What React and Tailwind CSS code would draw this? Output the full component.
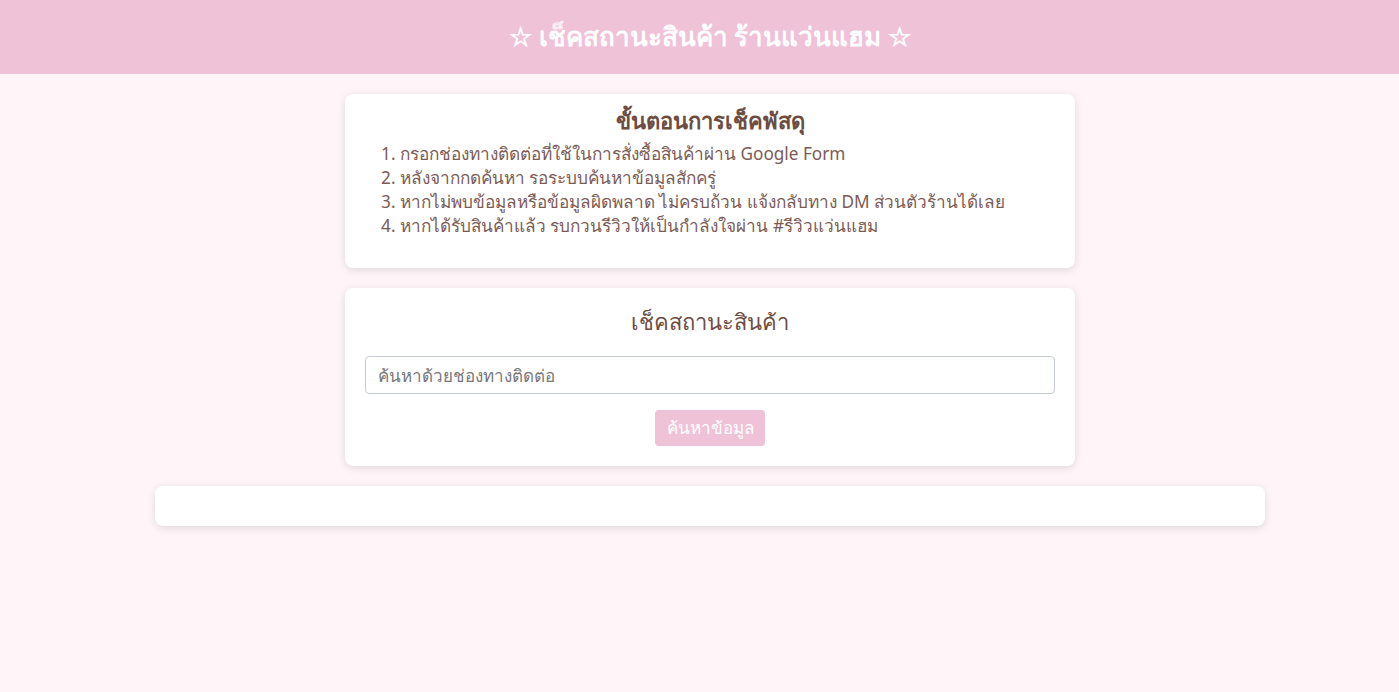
import React, { useState } from "react";

const steps = [
  "กรอกช่องทางติดต่อที่ใช้ในการสั่งซื้อสินค้าผ่าน Google Form",
  "หลังจากกดค้นหา รอระบบค้นหาข้อมูลสักครู่",
  "หากไม่พบข้อมูลหรือข้อมูลผิดพลาด ไม่ครบถ้วน แจ้งกลับทาง DM ส่วนตัวร้านได้เลย",
  "หากได้รับสินค้าแล้ว รบกวนรีวิวให้เป็นกำลังใจผ่าน #รีวิวแว่นแฮม",
];

const App = () => {
  const [query, setQuery] = useState(""); // search box value

  return (
    <div className="min-h-[692px] bg-[#fff4f8] font-['Noto_Sans','Liberation_Sans',sans-serif] text-[#7b5b55]">
      {/* header bar */}
      <header className="flex h-[74px] items-center justify-center bg-[#f0c2d8] pb-[2px] pl-[21px]">
        <h1 className="text-[26px] font-bold text-white">
          ☆ เช็คสถานะสินค้า ร้านแว่นแฮม ☆
        </h1>
      </header>

      <main className="flex flex-col items-center gap-5 pl-[21px] pt-5">
        {/* how-to card */}
        <section className="h-[174px] w-[730px] rounded-lg bg-white px-5 pt-2 shadow-[0_2px_8px_rgba(0,0,0,0.12)]">
          <h2 className="text-center text-[22px] font-bold leading-[36px] text-[#6d4c41]">
            ขั้นตอนการเช็คพัสดุ
          </h2>
          <ol className="mt-1 list-decimal pl-[35px] text-[17.2px] leading-6">
            {steps.map((s) => (
              <li key={s}>{s}</li>
            ))}
          </ol>
        </section>

        {/* search card */}
        <section className="flex w-[730px] flex-col items-center rounded-lg bg-white px-5 pb-5 pt-4 shadow-[0_2px_8px_rgba(0,0,0,0.12)]">
          <h2 className="text-[22px] leading-[34px] text-[#6d4c41]">เช็คสถานะสินค้า</h2>
          <input
            type="text"
            value={query}
            onChange={(e) => setQuery(e.target.value)}
            placeholder="ค้นหาด้วยช่องทางติดต่อ"
            className="mt-[18px] h-[38px] w-full rounded border border-[#c8cdd4] px-3 text-[17px] placeholder:text-[#777777] focus:outline-none"
          />
          <button className="mt-4 h-9 w-[110px] rounded bg-[#f0c2d8] text-[17px] text-white">
            ค้นหาข้อมูล
          </button>
        </section>

        {/* results card (empty) */}
        <section className="h-10 w-[1110px] rounded-lg bg-white shadow-[0_2px_8px_rgba(0,0,0,0.12)]" />
      </main>
    </div>
  );
};

export default App;
